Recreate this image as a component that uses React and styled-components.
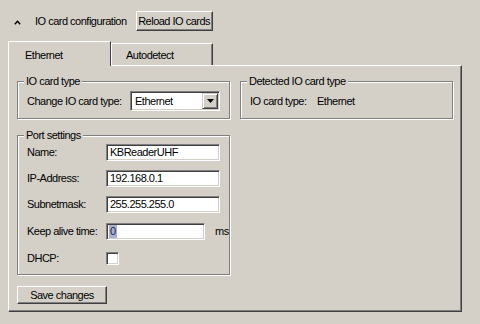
import React from 'react';
import styled, { createGlobalStyle } from 'styled-components';

const Global = createGlobalStyle`
  html, body { margin: 0; padding: 0; background: #d4d0c8; }
  body {
    font-family: "Liberation Sans", Tahoma, Arial, sans-serif;
    font-size: 11px;
    color: #000;
    letter-spacing: -0.5px;
  }
  #root { width: 480px; height: 324px; overflow: hidden; }
`;

const Page = styled.div`
  box-sizing: border-box;
  width: 480px;
  height: 324px;
  padding-top: 11px;
  background: #d4d0c8;
`;

const Header = styled.div`
  display: flex;
  align-items: center;
  height: 20px;
  padding-left: 14px;
`;

const Chevron = styled.svg`
  width: 7px;
  height: 5px;
  margin-right: 14px;
  margin-top: 2px;
`;

const HeaderTitle = styled.span`
  line-height: 13px;
  margin-right: 9px;
`;

const Button = styled.button`
  box-sizing: border-box;
  width: ${p => p.$w}px;
  height: ${p => p.$h}px;
  margin: 0;
  padding: 0;
  font: inherit;
  letter-spacing: inherit;
  color: #000;
  background: #d4d0c8;
  border: 1px solid;
  border-color: #fff #404040 #404040 #fff;
  box-shadow: inset -1px -1px 0 #808080;
  display: flex;
  align-items: center;
  justify-content: center;
`;

const TabStrip = styled.div`
  position: relative;
  z-index: 1;
  display: flex;
  align-items: flex-end;
  height: 24px;
  margin: 10px 0 0 8px;
`;

const Tab = styled.div`
  box-sizing: border-box;
  width: ${p => p.$w}px;
  height: ${p => (p.$active ? 25 : 22)}px;
  margin-bottom: ${p => (p.$active ? -1 : 0)}px;
  padding: ${p => (p.$active ? '1px 0 0 16px' : '1px 0 0 14px')};
  background: #d4d0c8;
  border-top: 1px solid #fff;
  border-left: 1px solid #fff;
  border-right: 1px solid #404040;
  box-shadow: ${p => (p.$active ? 'none' : 'inset -1px 0 0 #808080')};
  display: flex;
  align-items: center;
`;

const Panel = styled.div`
  box-sizing: border-box;
  width: 454px;
  height: 247px;
  margin-left: 8px;
  padding: 15px 0 0 8px;
  border: 1px solid;
  border-color: #fff #404040 #404040 #fff;
  box-shadow: inset -1px -1px 0 #808080;
  display: flex;
  flex-direction: column;
  align-items: flex-start;
`;

const GroupRow = styled.div`
  display: flex;
  gap: 10px;
`;

const Group = styled.div`
  position: relative;
  box-sizing: border-box;
  width: 213px;
  height: ${p => p.$h}px;
  margin-top: ${p => p.$mt || 0}px;
  padding: ${p => p.$pad};
  border: 1px solid #808080;
  box-shadow: inset 1px 1px 0 #fff, 1px 1px 0 #fff;
  display: flex;
  flex-direction: ${p => p.$col ? 'column' : 'row'};
  align-items: ${p => p.$col ? 'stretch' : 'center'};
`;

const Legend = styled.span`
  position: absolute;
  top: -7px;
  left: 6px;
  padding: 0 2px;
  line-height: 13px;
  background: #d4d0c8;
`;

const Label = styled.span`
  flex: none;
  width: ${p => p.$w}px;
  line-height: 13px;
`;

const Combo = styled.div`
  box-sizing: border-box;
  width: 90px;
  height: 20px;
  background: #fff;
  border: 1px solid;
  border-color: #808080 #fff #fff #808080;
  box-shadow: inset 1px 1px 0 #404040, inset -1px -1px 0 #d4d0c8;
  padding: 1px;
  display: flex;
  align-items: stretch;
`;

const ComboText = styled.span`
  flex: 1;
  padding-left: 3px;
  display: flex;
  align-items: center;
`;

const ArrowButton = styled.span`
  box-sizing: border-box;
  width: 16px;
  background: #d4d0c8;
  border: 1px solid;
  border-color: #d4d0c8 #404040 #404040 #d4d0c8;
  box-shadow: inset 1px 1px 0 #fff, inset -1px -1px 0 #808080;
  display: flex;
  align-items: center;
  justify-content: center;
`;

const Row = styled.div`
  display: flex;
  align-items: center;
  height: ${p => p.$h}px;
`;

const Field = styled.div`
  box-sizing: border-box;
  width: ${p => p.$w}px;
  height: 17px;
  padding: 0 2px 0 3px;
  background: #fff;
  border: 1px solid;
  border-color: #808080 #fff #fff #808080;
  box-shadow: inset 1px 1px 0 #404040, inset -1px -1px 0 #d4d0c8;
  display: flex;
  align-items: center;
  line-height: 13px;
  white-space: nowrap;
  overflow: hidden;
`;

const Selected = styled.span`
  background: #a9b3d1;
  color: #1a2450;
  padding: 0 1px;
  margin-left: -1px;
`;

const Unit = styled.span`
  margin-left: 10px;
  line-height: 13px;
`;

const Checkbox = styled.span`
  box-sizing: border-box;
  width: 13px;
  height: 13px;
  background: #fff;
  border: 1px solid;
  border-color: #808080 #fff #fff #808080;
  box-shadow: inset 1px 1px 0 #404040, inset -1px -1px 0 #d4d0c8;
`;

const SaveButton = styled(Button)`
  margin-top: 11px;
`;

const ports = [
  { label: 'Name:', value: 'KBReaderUHF', h: 26 },
  { label: 'IP-Address:', value: '192.168.0.1', h: 26 },
  { label: 'Subnetmask:', value: '255.255.255.0', h: 27 },
];

export default function App() {
  return (
    <>
      <Global />
      <Page>
        <Header>
          <Chevron viewBox="0 0 7 5">
            <polyline points="0.8,4.2 3.5,1.2 6.2,4.2" fill="none" stroke="#000" strokeWidth="1.4" />
          </Chevron>
          <HeaderTitle>IO card configuration</HeaderTitle>
          <Button $w={77} $h={20}>Reload IO cards</Button>
        </Header>

        <TabStrip>
          <Tab $active $w={103}>Ethernet</Tab>
          <Tab $w={102}>Autodetect</Tab>
        </TabStrip>

        <Panel>
          <GroupRow>
            <Group $h={38} $pad="2px 0 0 9px">
              <Legend>IO card type</Legend>
              <Label $w={103}>Change IO card type:</Label>
              <Combo>
                <ComboText>Ethernet</ComboText>
                <ArrowButton>
                  <svg width="7" height="4" viewBox="0 0 7 4">
                    <polygon points="0,0 7,0 3.5,4" fill="#000" />
                  </svg>
                </ArrowButton>
              </Combo>
            </Group>
            <Group $h={38} $pad="2px 0 0 9px">
              <Legend>Detected IO card type</Legend>
              <Label $w={67}>IO card type:</Label>
              <span>Ethernet</span>
            </Group>
          </GroupRow>

          <Group $col $h={140} $mt={16} $pad="3px 0 2px 9px">
            <Legend>Port settings</Legend>
            {ports.map(p => (
              <Row key={p.label} $h={p.h}>
                <Label $w={79}>{p.label}</Label>
                <Field $w={114}>{p.value}</Field>
              </Row>
            ))}
            <Row $h={27}>
              <Label $w={79}>Keep alive time:</Label>
              <Field $w={99}><Selected>0</Selected></Field>
              <Unit>ms</Unit>
            </Row>
            <Row $h={26}>
              <Label $w={79}>DHCP:</Label>
              <Checkbox />
            </Row>
          </Group>

          <SaveButton $w={90} $h={18}>Save changes</SaveButton>
        </Panel>
      </Page>
    </>
  );
}
